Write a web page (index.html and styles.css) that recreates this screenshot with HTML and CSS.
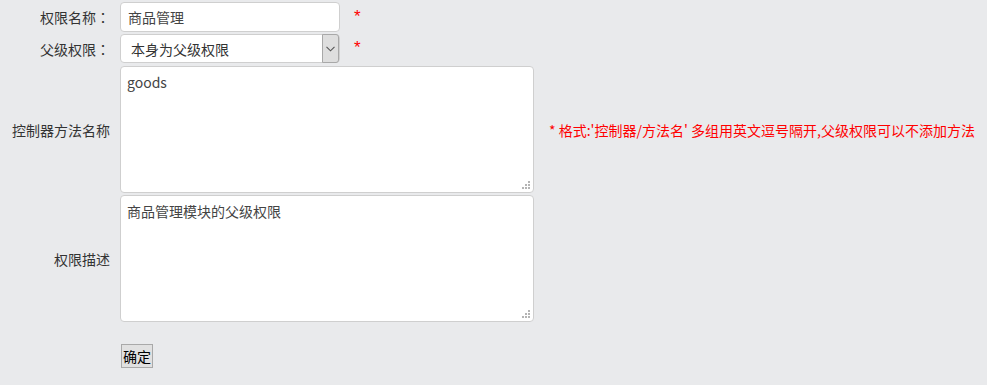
FILE: index.html
```html
<!DOCTYPE html>
<html lang="zh">
<head>
<meta charset="utf-8">
<title>权限编辑</title>
<link rel="stylesheet" href="styles.css">
</head>
<body>
<form class="form">
  <div class="row row-input">
    <label class="label">权限名称<span class="colon" lang="zh-Hant">：</span></label>
    <div class="field"><input class="text" type="text" value="商品管理"></div>
    <span class="req">*</span>
  </div>
  <div class="row row-select">
    <label class="label">父级权限<span class="colon" lang="zh-Hant">：</span></label>
    <div class="field select-wrap">
      <select class="select"><option>本身为父级权限</option></select>
      <span class="arrow"><svg width="9" height="6" viewBox="0 0 9 6"><path d="M0.5 0.8 L4.5 4.8 L8.5 0.8" fill="none" stroke="#555" stroke-width="1.1"/></svg></span>
    </div>
    <span class="req">*</span>
  </div>
  <div class="row row-area">
    <label class="label">控制器方法名称</label>
    <div class="field area-wrap"><textarea class="area">goods</textarea></div>
    <span class="note">* 格式:'控制器/方法名' 多组用英文逗号隔开,父级权限可以不添加方法</span>
  </div>
  <div class="row row-area">
    <label class="label">权限描述</label>
    <div class="field area-wrap"><textarea class="area">商品管理模块的父级权限</textarea></div>
  </div>
  <div class="row row-btn">
    <span class="label"></span>
    <div class="field"><button class="btn" type="button">确定</button></div>
  </div>
</form>
</body>
</html>
```
FILE: styles.css
```css
html, body {
  margin: 0;
  padding: 0;
  background: #e9eaec;
}
body {
  font-family: "Noto Sans CJK SC", "Noto Sans", sans-serif;
  font-size: 14px;
  color: #333;
}
.form {
  display: flex;
  flex-direction: column;
  padding-top: 2px;
}
.row {
  display: flex;
  align-items: center;
}
.label {
  width: 110px;
  text-align: right;
  margin-right: 10px;
  color: #333;
  line-height: 20px;
  flex: none;
}
.colon {
  font-family: "Noto Sans CJK TC", sans-serif;
}
.field {
  flex: none;
}
.row-input {
  height: 30px;
}
.row-select {
  height: 29px;
  margin-top: 2px;
}
.row-area {
  height: 127px;
  margin-top: 3px;
}
.row-area + .row-area {
  margin-top: 2px;
}
.row-btn {
  margin-top: 22px;
}
.text {
  box-sizing: border-box;
  width: 220px;
  height: 30px;
  border: 1px solid #cfcfcf;
  border-radius: 4px;
  background: #fff;
  padding: 0 7px;
  font: inherit;
  color: #444;
  outline: none;
}
.select-wrap {
  position: relative;
  width: 220px;
  height: 29px;
}
.select {
  box-sizing: border-box;
  width: 220px;
  height: 29px;
  border: 1px solid #cfcfcf;
  border-radius: 4px;
  background: #fff;
  padding: 0 0 0 10px;
  font: inherit;
  color: #333;
  appearance: none;
  -webkit-appearance: none;
  outline: none;
}
.arrow {
  position: absolute;
  top: 0;
  right: 1px;
  width: 17px;
  height: 29px;
  box-sizing: border-box;
  background: #dedede;
  border: 1px solid #a8a8a8;
  border-radius: 0 3px 3px 0;
  display: flex;
  align-items: center;
  justify-content: center;
}
.req {
  color: #ff0000;
  margin-left: 14px;
  font-family: "Liberation Sans", sans-serif;
  font-size: 17px;
  line-height: 17px;
  position: relative;
  top: -1px;
}
.area-wrap {
  position: relative;
}
.area-wrap::after {
  content: "";
  position: absolute;
  right: 4px;
  bottom: 4px;
  width: 8px;
  height: 8px;
  background:
    linear-gradient(#b4b4b4, #b4b4b4) 6px 0 / 2px 2px no-repeat,
    linear-gradient(#b4b4b4, #b4b4b4) 3px 3px / 2px 2px no-repeat,
    linear-gradient(#b4b4b4, #b4b4b4) 6px 3px / 2px 2px no-repeat,
    linear-gradient(#b4b4b4, #b4b4b4) 0 6px / 2px 2px no-repeat,
    linear-gradient(#b4b4b4, #b4b4b4) 3px 6px / 2px 2px no-repeat,
    linear-gradient(#b4b4b4, #b4b4b4) 6px 6px / 2px 2px no-repeat;
  pointer-events: none;
}
.area {
  box-sizing: border-box;
  display: block;
  width: 414px;
  height: 127px;
  border: 1px solid #cfcfcf;
  border-radius: 4px;
  background: #fff;
  padding: 5px 6px;
  font: inherit;
  line-height: 20px;
  color: #444;
  outline: none;
  resize: none;
}
.note {
  color: #ff0000;
  margin-left: 15px;
  white-space: nowrap;
}
.btn {
  box-sizing: border-box;
  width: 32px;
  height: 24px;
  padding: 0;
  margin-left: 1px;
  border: 1px solid #a9a9a9;
  background: #e1e1e1;
  font-family: "Noto Sans CJK SC", sans-serif;
  font-size: 14px;
  color: #000;
  border-radius: 0;
}
```
